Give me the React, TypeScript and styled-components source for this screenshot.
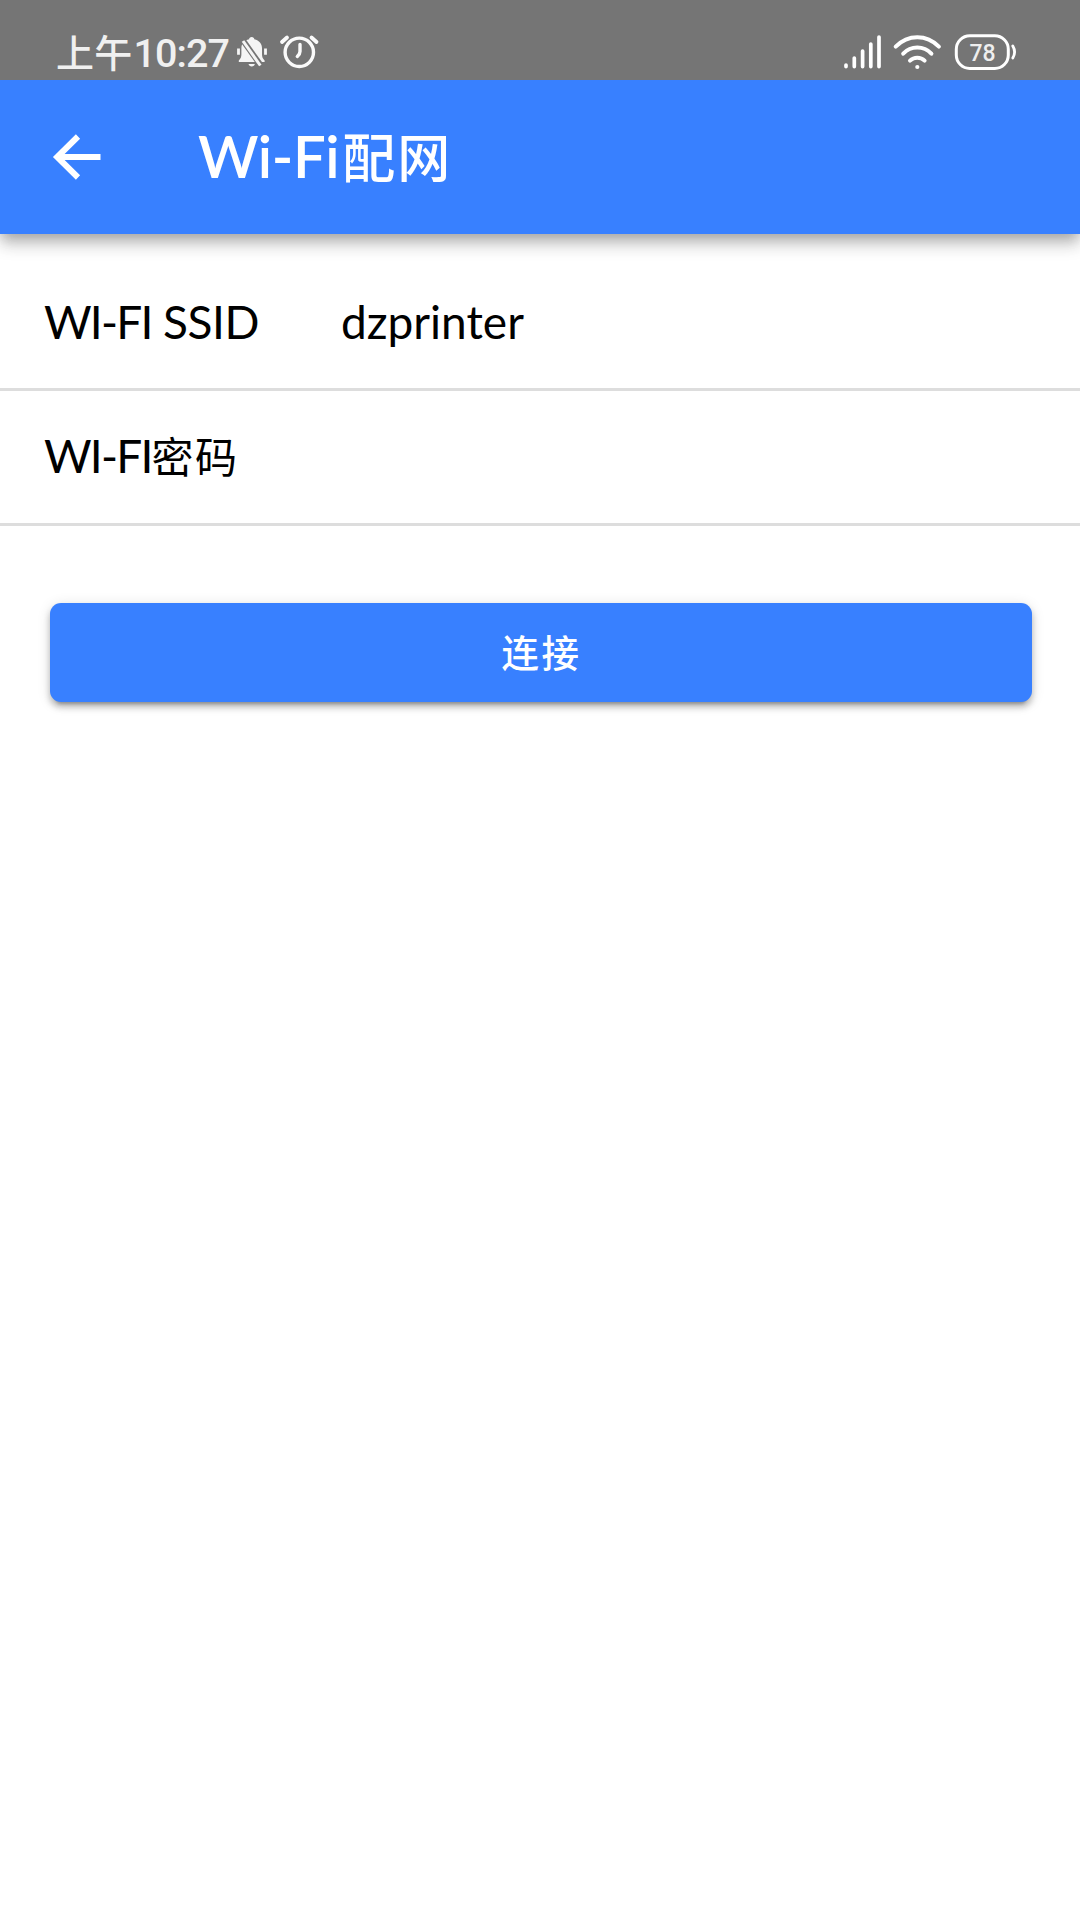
import React from "react";
import styled, { createGlobalStyle } from "styled-components";

const GlobalStyle = createGlobalStyle`
  html, body { margin: 0; padding: 0; background: #fff; }
  * { box-sizing: border-box; }
`;

const Screen = styled.div`
  display: flex;
  flex-direction: column;
  width: 1080px;
  min-height: 1920px;
  background: #ffffff;
  font-family: Lato, "Noto Sans CJK SC", sans-serif;
`;

const StatusBar = styled.div`
  display: flex;
  justify-content: space-between;
  height: 80px;
  padding: 24px 61px 0 56px;
  background: #757575;
`;

const StatusGroup = styled.div`
  display: flex;
  align-items: center;
  height: 56px;
`;

const Run = styled.span<{ $size: number; $weight?: number; $spacing?: number; $gap?: number }>`
  font-size: ${(p) => p.$size}px;
  font-weight: ${(p) => p.$weight ?? 400};
  letter-spacing: ${(p) => p.$spacing ?? 0}px;
  margin-left: ${(p) => p.$gap ?? 0}px;
  white-space: pre;
`;

const Digits = styled(Run)`
  font-family: Roboto, sans-serif;
`;

const Clock = styled.div`
  display: flex;
  align-items: baseline;
  width: 180px;
  padding-top: 2px;
  line-height: 56px;
  color: #f0f0f0;
`;

const Header = styled.header`
  display: flex;
  align-items: center;
  height: 154px;
  padding-left: 52px;
  background: #3880ff;
  box-shadow: 0 6px 12px -3px rgba(0, 0, 0, 0.2), 0 12px 15px rgba(0, 0, 0, 0.14), 0 3px 20px rgba(0, 0, 0, 0.12);
  clip-path: inset(0 0 -40px 0);
`;

const Title = styled.h1`
  display: flex;
  align-items: baseline;
  margin: 0 0 0 97px;
  line-height: 80px;
  color: #ffffff;
`;

const Form = styled.main`
  display: flex;
  flex-direction: column;
  padding-top: 22px;
`;

const Row = styled.div`
  display: flex;
  align-items: center;
  height: 135px;
  padding: 0 0 1px 44px;
  border-bottom: 3px solid #dddddd;
  line-height: 60px;
  color: #000000;
`;

const Label = styled.div`
  display: flex;
  align-items: baseline;
  width: 297px;
`;

const ConnectButton = styled.button`
  display: flex;
  align-items: center;
  justify-content: center;
  height: 99px;
  margin: 77px 48px 0 50px;
  padding: 0 0 4px 1px;
  border: 0;
  border-radius: 11px;
  background: #3880ff;
  color: #ffffff;
  font-family: inherit;
  box-shadow: 0 8px 3px -6px rgba(0, 0, 0, 0.2), 0 5px 6px rgba(0, 0, 0, 0.24), 0 2px 14px rgba(0, 0, 0, 0.12);
`;

const MutedAndAlarm = () => (
  <svg width="84" height="36" viewBox="236 34 84 36" fill="none">
    <path d="M251.700 37c1.600 0 2.500 1 2.600 2.200 5 1.200 7.700 4.500 7.700 8.800v6.200c0 2.800.7 4.200 2.600 6.300V62h-25.800v-1.500c1.900-2.100 2.600-3.500 2.600-6.300V48c0-4.300 2.700-7.600 7.700-8.800.1-1.200 1-2.200 2.600-2.200z" fill="#f5f5f5" />
    <path d="M248.500 64h6.400c-.4 1.600-1.500 2.500-3.200 2.500s-2.800-.9-3.200-2.500z" fill="#f5f5f5" />
    <path d="M238.500 48.500v6.300M265.500 48.500v6.300" stroke="#f5f5f5" strokeWidth="2.800" />
    <path d="M243 40.500L260.500 65" stroke="#757575" strokeWidth="5.800" />
    <path d="M243 41L260.300 65.500" stroke="#f5f5f5" strokeWidth="3" />
    <g stroke="#fafafa" strokeWidth="3.400" strokeLinecap="round">
      <circle cx="299.300" cy="52.300" r="14.200" />
      <path d="M300 44.500v7c0 2-1 3.500-2.700 5" strokeLinejoin="round" />
      <path d="M282 42l5-4.500M311.500 37.500l5 4.500" strokeWidth="3.800" />
    </g>
  </svg>
);

const Signal = () => (
  <svg width="176" height="40" viewBox="843 32 176 40" fill="none" stroke="#ffffff" strokeLinecap="round">
    <path d="M846 65v1.600M854.300 58v8.600M862.600 51v15.600M870.800 44v22.600M879 37v29.600" strokeWidth="3.700" />
    <path d="M895.700 46.600Q905 37.200 917.300 37.200T938.900 46.600" strokeWidth="4" />
    <path d="M903.200 53.700Q909 47.600 917.300 47.600T931.400 53.700" strokeWidth="4" />
    <path d="M910 60.700Q913 57.700 917.300 57.700T924.600 60.700" strokeWidth="4" />
    <circle cx="917.300" cy="67" r="2.100" fill="#ffffff" stroke="none" />
    <rect x="956.300" y="35.800" width="52" height="32.600" rx="13.500" strokeWidth="3" />
    <path d="M1012.800 46q3.600 6 0 12" strokeWidth="2.800" />
  </svg>
);

const SignalBox = styled.div`
  position: relative;
  display: flex;
`;

const BatteryLevel = styled.span`
  position: absolute;
  left: 113px;
  top: 4px;
  width: 53px;
  line-height: 35px;
  text-align: center;
  font-family: Roboto, sans-serif;
  font-size: 23px;
  font-weight: 500;
  color: #eeeeee;
`;

const BackArrow = () => (
  <svg width="49" height="46" viewBox="0 0 49 46" fill="none" stroke="#ffffff" strokeWidth="6">
    <path d="M48.500 23H5M26 2.500L5.200 23l20.800 20.500" />
  </svg>
);

export default function App() {
  return (
    <Screen>
      <GlobalStyle />
      <StatusBar>
        <StatusGroup>
          <Clock>
            <Run $size={38} $weight={500} $spacing={0.3}>上午</Run>
            <Digits $size={39.500} $weight={500} $spacing={-1} $gap={1}>10:27</Digits>
          </Clock>
          <MutedAndAlarm />
        </StatusGroup>
        <StatusGroup>
          <SignalBox>
            <Signal />
            <BatteryLevel>78</BatteryLevel>
          </SignalBox>
        </StatusGroup>
      </StatusBar>
      <Header>
        <BackArrow />
        <Title>
          <Run $size={58} $weight={600} $spacing={-0.4}>Wi-Fi</Run>
          <Run $size={53} $weight={500} $spacing={2} $gap={3}>配网</Run>
        </Title>
      </Header>
      <Form>
        <Row>
          <Label>
            <Run $size={46} $spacing={-1.8}>WI-FI</Run>
            <Run $size={46} $spacing={-0.4}> SSID</Run>
          </Label>
          <Run $size={46}>dzprinter</Run>
        </Row>
        <Row>
          <Label>
            <Run $size={46} $spacing={-1.8}>WI-FI</Run>
            <Run $size={42} $spacing={1.5}>密码</Run>
          </Label>
        </Row>
        <ConnectButton type="button">
          <Run $size={37.500} $weight={500} $spacing={2.500}>连接</Run>
        </ConnectButton>
      </Form>
    </Screen>
  );
}
